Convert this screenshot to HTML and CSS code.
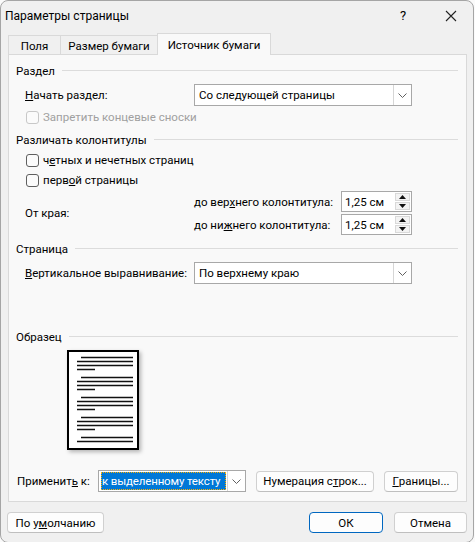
FILE: index.html
```html
<!DOCTYPE html>
<html lang="ru">
<head>
<meta charset="utf-8">
<title>Параметры страницы</title>
<link rel="stylesheet" href="styles.css">
</head>
<body>
<div class="window">
  <div class="titlebar">
    <span class="title">Параметры страницы</span>
    <span class="help">?</span>
    <span class="close"><svg width="12" height="12" viewBox="0 0 12 12"><path d="M1 1L11 11M11 1L1 11" stroke="#222" stroke-width="1.1" fill="none"/></svg></span>
  </div>
  <div class="tabs">
    <div class="tab t1">Поля</div>
    <div class="tab t2">Размер бумаги</div>
    <div class="tab t3 active">Источник бумаги</div>
  </div>
  <div class="panel">
    <div class="group g1"><span>Раздел</span><i></i></div>
    <div class="row r1">
      <span class="lbl"><u>Н</u>ачать раздел:</span>
      <div class="combo wide"><span class="val">Со следующей страницы</span><span class="arrow"><svg width="9" height="5" viewBox="0 0 9 5"><path d="M0.5 0.5L4.5 4.5L8.5 0.5" stroke="#606060" fill="none"/></svg></span></div>
    </div>
    <div class="check disabled c0"><span class="box"></span><span>Запретить концевые сноски</span></div>
    <div class="group g2"><span>Различать колонтитулы</span><i></i></div>
    <div class="check c1"><span class="box"></span><span>ч<u>е</u>тных и нечетных страниц</span></div>
    <div class="check c2"><span class="box"></span><span>перв<u>о</u>й страницы</span></div>
    <div class="edge">
      <span class="lbl">От края:</span>
      <div class="spins">
        <div class="spinrow"><span class="slbl">до вер<u>х</u>него колонтитула:</span><div class="spin"><span class="val">1,25 см</span><span class="sbtns"><span class="sb"><svg width="7" height="4" viewBox="0 0 7 4"><path d="M0 4L3.5 0L7 4Z" fill="#111"/></svg></span><span class="sb"><svg width="7" height="4" viewBox="0 0 7 4"><path d="M0 0L3.5 4L7 0Z" fill="#111"/></svg></span></span></div></div>
        <div class="spinrow"><span class="slbl">до ни<u>ж</u>него колонтитула:</span><div class="spin"><span class="val">1,25 см</span><span class="sbtns"><span class="sb"><svg width="7" height="4" viewBox="0 0 7 4"><path d="M0 4L3.5 0L7 4Z" fill="#111"/></svg></span><span class="sb"><svg width="7" height="4" viewBox="0 0 7 4"><path d="M0 0L3.5 4L7 0Z" fill="#111"/></svg></span></span></div></div>
      </div>
    </div>
    <div class="group g3"><span>Страница</span><i></i></div>
    <div class="row r2">
      <span class="lbl"><u>В</u>ертикальное выравнивание:</span>
      <div class="combo wide"><span class="val">По верхнему краю</span><span class="arrow"><svg width="9" height="5" viewBox="0 0 9 5"><path d="M0.5 0.5L4.5 4.5L8.5 0.5" stroke="#606060" fill="none"/></svg></span></div>
    </div>
    <div class="group g4"><span>Образец</span><i></i></div>
    <div class="sample">
      <svg width="72" height="100" viewBox="0 0 72 100">
        <rect x="1" y="1" width="70" height="98" fill="#fff" stroke="#000" stroke-width="2"/>
        <g stroke="#111" stroke-width="1.3">
          <path d="M14 7.5H66M10 11.5H66M10 15.5H66M10 19.5H28"/>
          <path d="M14 27.5H66M10 31.5H66M10 35.5H66M10 39.5H28"/>
          <path d="M14 47.5H66M10 51.5H66M10 55.5H66M10 59.5H28"/>
          <path d="M14 67.5H66M10 71.5H66M10 75.5H66M10 79.5H28"/>
          <path d="M14 87.5H66M10 91.5H66"/>
        </g>
      </svg>
    </div>
    <div class="apply">
      <span class="albl">Применит<u>ь</u> к:</span>
      <div class="combo acombo"><span class="sel">к выделенному тексту</span><span class="arrow"><svg width="9" height="5" viewBox="0 0 9 5"><path d="M0.5 0.5L4.5 4.5L8.5 0.5" stroke="#606060" fill="none"/></svg></span></div>
      <button class="btn bnum">Нумерация с<u>т</u>рок...</button>
      <button class="btn bbor"><u>Г</u>раницы...</button>
    </div>
  </div>
  <div class="footer">
    <button class="btn bdef">По у<u>м</u>олчанию</button>
    <span class="spacer"></span>
    <button class="btn bok">ОК</button>
    <button class="btn bcancel">Отмена</button>
  </div>
</div>
</body>
</html>
```
FILE: styles.css
```css
* { box-sizing: border-box; }
body {
  margin: 0;
  width: 475px;
  height: 542px;
  overflow: hidden;
  background: #fafafa;
  font-family: "Segoe UI", Roboto, "Noto Sans", sans-serif;
  font-size: 11.5px;
  color: #000;
  white-space: nowrap;
}
u { text-decoration: underline; text-underline-offset: 1px; text-decoration-thickness: 1px; }
.window {
  width: 474px;
  height: 543px;
  background: #f0f0f0;
  border: 1px solid #a5a5a5;
  border-radius: 8px;
  display: flex;
  flex-direction: column;
}
.titlebar {
  height: 29px;
  display: flex;
  align-items: center;
  padding-left: 4px;
  font-size: 12px;
}
.title { flex: 1; }
.help { width: 12px; margin-right: 33px; font-size: 13px; }
.close { width: 12px; margin-right: 16px; display: flex; }
.tabs {
  display: flex;
  align-items: flex-end;
  height: 24px;
  margin-left: 7px;
  position: relative;
  z-index: 1;
}
.tab {
  height: 19px;
  border: 1px solid #d9d9d9;
  border-bottom: none;
  background: #f0f0f0;
  display: flex;
  align-items: center;
  justify-content: center;
  padding-top: 1px;
  margin-right: -1px;
}
.t1 { width: 53px; }
.t2 { width: 98px; }
.t3 { width: 114px; }
.tab.active {
  height: 22px;
  background: #f9f9f9;
  margin-bottom: -1px;
  padding-top: 0;
}
.panel {
  width: 459px;
  height: 448px;
  margin-left: 7px;
  background: #f9f9f9;
  border: 1px solid #d9d9d9;
  padding: 0 8px 0 7px;
  display: flex;
  flex-direction: column;
}
.group {
  height: 16px;
  display: flex;
  align-items: center;
}
.group i { flex: 1; height: 1px; background: #dcdcdc; margin-left: 7px; margin-top: -1px; }
.g1 { margin-top: 8px; }
.g2 { margin-top: 7px; }
.g3 { margin-top: 6px; }
.g4 { margin-top: 45px; }
.row {
  display: flex;
  align-items: center;
  height: 22px;
  margin-top: 5px;
  padding-left: 9px;
}
.lbl { width: 169px; flex: none; }
.combo {
  height: 22px;
  background: #fff;
  border: 1px solid #a8a8a8;
  display: flex;
  align-items: center;
}
.combo.wide { width: 218px; }
.combo .val { flex: 1; padding-left: 4px; }
.arrow {
  width: 18px;
  height: 20px;
  border-left: 1px solid #d6d6d6;
  display: flex;
  align-items: center;
  justify-content: center;
}
.check {
  display: flex;
  align-items: center;
  height: 16px;
  padding-left: 10px;
  margin-top: 4px;
}
.c0 { margin-top: 3px; }
.box {
  width: 13px;
  height: 13px;
  border: 1px solid #5f5f5f;
  border-radius: 3px;
  background: #fbfbfb;
  margin-right: 4px;
}
.disabled { color: #a0a0a0; }
.disabled .box { border-color: #c8c8c8; }
.edge {
  display: flex;
  align-items: center;
  padding-left: 9px;
  margin-top: 3px;
}
.spins { display: flex; flex-direction: column; gap: 2px; }
.spinrow { display: flex; align-items: center; height: 21px; }
.slbl { width: 147px; }
.spin {
  width: 71px;
  height: 21px;
  background: #fff;
  border: 1px solid #a8a8a8;
  display: flex;
  align-items: center;
}
.spin .val { flex: 1; padding-left: 3px; }
.sbtns {
  width: 17px;
  height: 19px;
  display: flex;
  flex-direction: column;
  padding: 1px;
  gap: 1px;
}
.sb {
  flex: 1;
  border: 1px solid #d9d9d9;
  background: #f3f3f3;
  display: flex;
  align-items: center;
  justify-content: center;
}
.sample {
  margin-top: 5px;
  margin-left: 51px;
  width: 72px;
  height: 100px;
  box-shadow: 2px 2px 4px rgba(0, 0, 0, 0.28);
}
.sample svg { display: block; }
.apply {
  display: flex;
  align-items: center;
  height: 22px;
  margin-top: 20px;
  padding-left: 1px;
}
.albl { width: 81px; }
.acombo { width: 148px; }
.sel {
  flex: 1;
  height: 18px;
  margin: 0 1px 0 2px;
  background: #0078d7;
  color: #fff;
  outline: 1px dotted #ffb000;
  outline-offset: -1px;
  display: flex;
  align-items: center;
  padding-left: 1px;
  letter-spacing: -0.15px;
  overflow: hidden;
}
.btn {
  font: inherit;
  color: #000;
  height: 21px;
  background: #fdfdfd;
  border: 1px solid #d0d0d0;
  border-bottom-color: #bfbfbf;
  border-radius: 4px;
  padding: 0;
  display: flex;
  align-items: center;
  justify-content: center;
}
.bnum { width: 118px; margin-left: 10px; }
.bbor { width: 74px; margin-left: 10px; }
.footer {
  display: flex;
  align-items: center;
  margin-top: 10px;
  padding-left: 6px;
}
.spacer { flex: 1; }
.bdef { width: 97px; }
.bok { width: 74px; border: 1px solid #0067c0; }
.bcancel { width: 73px; margin-left: 11px; margin-right: 6px; }
```
